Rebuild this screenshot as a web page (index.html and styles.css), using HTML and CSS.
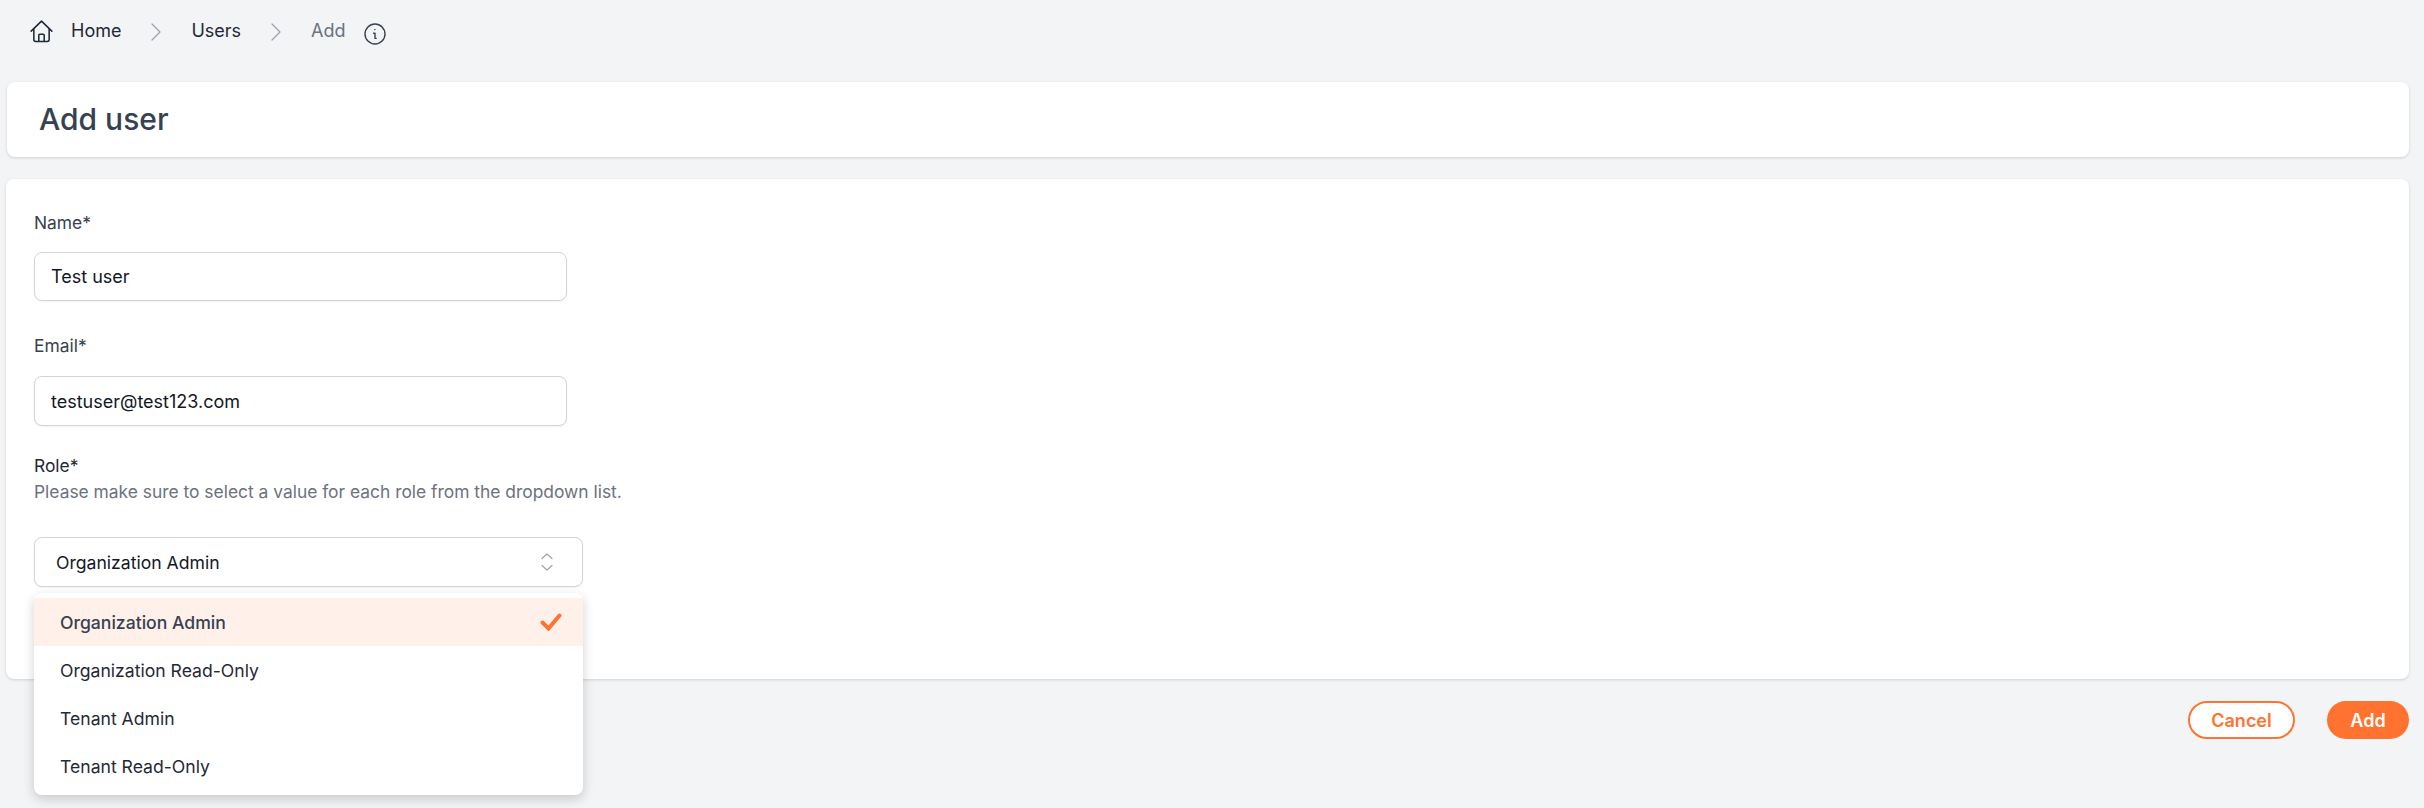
FILE: index.html
```html
<!DOCTYPE html>
<html lang="en">
<head>
    <meta charset="UTF-8">
    <title>Add user</title>
    <link rel="stylesheet" href="styles.css">
</head>
<body>

    <nav class="breadcrumb">
        <svg class="home-icon" viewBox="0 0 24 24" fill="none" stroke="currentColor" stroke-width="1.6" stroke-linecap="round" stroke-linejoin="round">
            <path d="M1.2 11.6 12 1.2l10.8 10.4"/>
            <path d="M4 9.2v11.2a2 2 0 0 0 2 2h12a2 2 0 0 0 2-2V9.2"/>
            <path d="M9.2 22.2v-6.4a1 1 0 0 1 1-1h3.6a1 1 0 0 1 1 1v6.4"/>
        </svg>
        <a class="crumb crumb-home">Home</a>
        <svg class="crumb-sep" viewBox="0 0 10 18" fill="none" stroke="currentColor" stroke-width="1.3" stroke-linecap="round" stroke-linejoin="round"><path d="M1 1l8 8-8 8"/></svg>
        <a class="crumb">Users</a>
        <svg class="crumb-sep" viewBox="0 0 10 18" fill="none" stroke="currentColor" stroke-width="1.3" stroke-linecap="round" stroke-linejoin="round"><path d="M1 1l8 8-8 8"/></svg>
        <span class="crumb crumb-current">Add</span>
        <svg class="info-icon" viewBox="0 0 22 22" fill="none" stroke="currentColor" stroke-width="1.4" stroke-linecap="round" stroke-linejoin="round">
            <circle cx="11" cy="11" r="10"/>
            <path d="M9.6 10.2h1.4v5.2h1.2"/>
            <path d="M10.8 6.6h.2"/>
        </svg>
    </nav>

    <header class="title-card">
        <h1>Add user</h1>
    </header>

    <main class="form-card">
        <div class="field field-name">
            <label for="name">Name*</label>
            <input id="name" type="text" value="Test user">
        </div>
        <div class="field field-email">
            <label for="email">Email*</label>
            <input id="email" type="text" value="testuser@test123.com">
        </div>
        <div class="field field-role">
            <label>Role*</label>
            <p class="help">Please make sure to select a value for each role from the dropdown list.</p>
            <div class="select-wrap">
                <button class="select" type="button">
                    <span>Organization Admin</span>
                    <svg class="updown" viewBox="0 0 12 18" fill="none" stroke="currentColor" stroke-width="1.2" stroke-linecap="round" stroke-linejoin="round">
                        <path d="M1 5.5 6 1l5 4.5"/>
                        <path d="M1 12.5 6 17l5-4.5"/>
                    </svg>
                </button>
                <ul class="menu">
                    <li class="menu-item selected">
                        Organization Admin
                        <svg class="check" viewBox="0 0 22 18" fill="none" stroke="currentColor" stroke-width="4" stroke-linecap="round" stroke-linejoin="miter"><path d="M2.5 9.5l6 6L19.5 2.5"/></svg>
                    </li>
                    <li class="menu-item">Organization Read-Only</li>
                    <li class="menu-item">Tenant Admin</li>
                    <li class="menu-item">Tenant Read-Only</li>
                </ul>
            </div>
        </div>
    </main>

    <div class="actions">
        <button class="btn btn-outline" type="button">Cancel</button>
        <button class="btn btn-solid" type="button">Add</button>
    </div>

</body>
</html>
```

FILE: styles.css
```css
* {
    box-sizing: border-box;
}
body {
    font-family: 'Inter', 'Liberation Sans', sans-serif;
    font-size: 17.4px;
    background-color: #f3f4f6;
    color: #374151;
    margin: 0;
    padding: 0 15px 0 7px;
    height: 808px;
    overflow: hidden;
}
.breadcrumb {
    display: flex;
    align-items: flex-start;
    height: 82px;
    padding: 20px 0 0 23px;
    font-size: 18px;
    line-height: 22px;
    color: #1f2937;
}
.home-icon {
    width: 23px;
    height: 23px;
    margin-right: 18px;
}
.crumb {
    color: #1f2937;
}
.crumb-sep {
    width: 10px;
    height: 18px;
    margin: 3px 30px 0;
    color: #9ca3af;
}
.crumb-current {
    color: #6b7280;
}
.info-icon {
    width: 22px;
    height: 22px;
    margin: 3px 0 0 18px;
    color: #374151;
}
.title-card {
    background-color: #fff;
    height: 75px;
    border-radius: 8px;
    box-shadow: 0 1px 3px rgba(0,0,0,0.15);
    padding: 0 32px;
    display: flex;
    align-items: center;
}
h1 {
    margin: -2px 0 0;
    font-size: 30px;
    font-weight: 500;
    color: #374151;
}
.form-card {
    background-color: #fff;
    height: 500px;
    margin-top: 22px;
    margin-left: -1px;
    border-radius: 8px;
    box-shadow: 0 1px 3px rgba(0,0,0,0.15);
    padding: 32px 28px 0;
}
.field label {
    display: block;
    line-height: 24px;
}
.field-name input {
    height: 49px;
    margin-top: 17px;
}
.field-email {
    margin-top: 33px;
}
.field-email input {
    height: 50px;
    margin-top: 18px;
}
.field input {
    display: block;
    width: 533px;
    border: 1px solid #d0d5dd;
    border-radius: 8px;
    padding: 0 16px;
    font-family: inherit;
    font-size: 18px;
    color: #111827;
    background-color: #fff;
    box-shadow: 0 1px 2px rgba(0,0,0,0.05);
}
.field-role {
    margin-top: 28px;
}
.field-role label {
    color: #1f2937;
}
.help {
    margin: 2px 0 0;
    line-height: 24px;
    color: #6b7280;
}
.select-wrap {
    position: relative;
    width: 549px;
    margin-top: 33px;
}
.select {
    display: flex;
    align-items: center;
    justify-content: space-between;
    width: 100%;
    height: 50px;
    padding: 0 29px 0 21px;
    border: 1px solid #d0d5dd;
    border-radius: 8px;
    background-color: #fff;
    font-family: inherit;
    font-size: 17.6px;
    color: #111827;
    box-shadow: 0 1px 2px rgba(0,0,0,0.05);
}
.updown {
    width: 12px;
    height: 18px;
    color: #9ca3af;
}
.menu {
    position: absolute;
    top: 56px;
    left: 0;
    width: 100%;
    height: 202px;
    margin: 0;
    padding: 5px 0;
    list-style: none;
    font-size: 17.6px;
    background-color: #fff;
    border-radius: 8px;
    box-shadow: 0 4px 12px rgba(0,0,0,0.18);
}
.menu-item {
    display: flex;
    align-items: center;
    justify-content: space-between;
    height: 48px;
    padding: 0 21px 0 26px;
    color: #1f2937;
}
.menu-item.selected {
    background-color: #fff1ea;
    color: #374151;
    font-weight: 500;
}
.check {
    width: 22px;
    height: 18px;
    color: #ff7230;
}
.actions {
    display: flex;
    justify-content: flex-end;
    gap: 32px;
    margin-top: 22px;
}
.btn {
    height: 38px;
    border-radius: 19px;
    font-family: inherit;
    font-size: 18px;
    font-weight: 600;
    padding: 0;
}
.btn-outline {
    width: 107px;
    border: 2px solid #ff7230;
    background-color: #fff;
    color: #ff7230;
}
.btn-solid {
    width: 82px;
    border: none;
    background-color: #ff7230;
    color: #fff;
}
```
